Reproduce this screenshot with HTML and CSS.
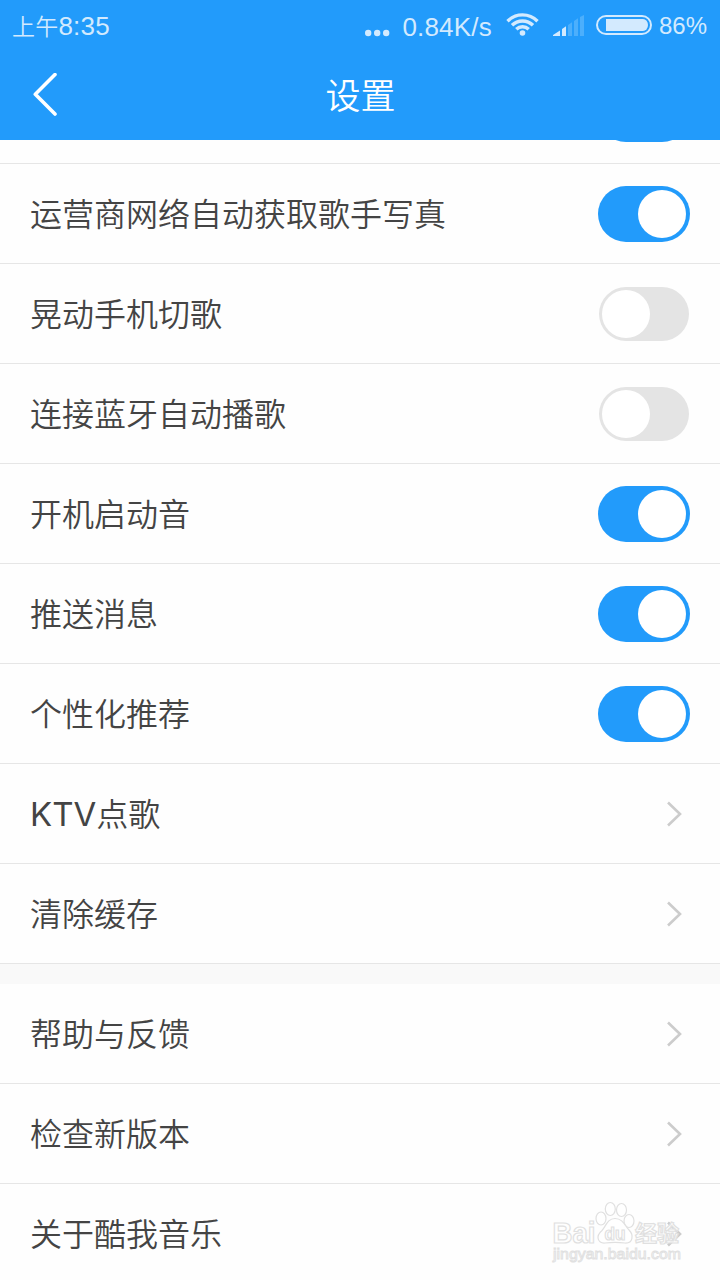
FILE: index.html
```html
<!DOCTYPE html>
<html lang="zh-CN">
<head>
  <meta charset="UTF-8">
  <title>设置</title>
  <link rel="stylesheet" href="styles.css">
</head>
<body>
  <div class="status-bar">
    <div class="time"><span>上午</span>8:35</div>
    <svg class="dots" width="25" height="8" viewBox="0 0 25 8"><circle cx="3.2" cy="4" r="3.2"/><circle cx="12.2" cy="4" r="3.2"/><circle cx="21.2" cy="4" r="3.2"/></svg>
    <div class="speed">0.84K/s</div>
    <svg class="wifi" width="34" height="26" viewBox="0 0 34 26">
      <circle cx="16.5" cy="21" r="2.8"/>
      <path d="M1.5 9.200a21 21 0 0 1 30 0M6 13.300a14.800 14.800 0 0 1 21 0M10.300 17.300a8.800 8.800 0 0 1 12.400 0"/>
    </svg>
    <svg class="signal" width="32" height="22" viewBox="0 0 32 22">
      <path d="M0 21V20L7 15.5V21zM9 14l4-2.700V21H9z"/>
      <path class="weak" d="M15 10l4-2.700V21h-4zM21 6l4-2.700V21h-4zM27 2l4-2v21h-4z"/>
    </svg>
    <svg class="battery" width="56" height="20" viewBox="0 0 56 20">
      <rect class="shell" x="1" y="1" width="54" height="18" rx="9"/>
      <path d="M10 4h37a5 6 0 0 1 0 12H10z"/>
    </svg>
    <div class="percent">86%</div>
  </div>

  <div class="header">
    <svg class="back" width="26" height="44" viewBox="0 0 26 44"><path d="M22 1.500L2.300 21.300 22 41"/></svg>
    <h1>设置</h1>
  </div>

  <div class="list">
    <div class="row first"><span></span><span class="switch on"></span></div>
    <div class="row"><span>运营商网络自动获取歌手写真</span><span class="switch on"></span></div>
    <div class="row"><span>晃动手机切歌</span><span class="switch"></span></div>
    <div class="row"><span>连接蓝牙自动播歌</span><span class="switch"></span></div>
    <div class="row"><span>开机启动音</span><span class="switch on"></span></div>
    <div class="row"><span>推送消息</span><span class="switch on"></span></div>
    <div class="row"><span>个性化推荐</span><span class="switch on"></span></div>
    <div class="row"><span><b>KTV</b>点歌</span><svg class="arrow" viewBox="0 0 16 26"><path d="M2 1.5L14 13 2 24.5"/></svg></div>
    <div class="row"><span>清除缓存</span><svg class="arrow" viewBox="0 0 16 26"><path d="M2 1.5L14 13 2 24.5"/></svg></div>
    <div class="gap"></div>
    <div class="row"><span>帮助与反馈</span><svg class="arrow" viewBox="0 0 16 26"><path d="M2 1.5L14 13 2 24.5"/></svg></div>
    <div class="row"><span>检查新版本</span><svg class="arrow" viewBox="0 0 16 26"><path d="M2 1.5L14 13 2 24.5"/></svg></div>
    <div class="row"><span>关于酷我音乐</span><svg class="arrow" viewBox="0 0 16 26"><path d="M2 1.5L14 13 2 24.5"/></svg></div>
  </div>

  <svg class="watermark" width="140" height="70" viewBox="0 0 140 70">
    <ellipse cx="51" cy="17.500" rx="5" ry="6.5"/>
    <ellipse cx="60.300" cy="8" rx="5" ry="6.500"/>
    <ellipse cx="71.500" cy="9" rx="5" ry="6.500"/>
    <ellipse cx="79" cy="20" rx="5" ry="6.500"/>
    <path d="M65 17.500c-8 0-9 8-13 12-7 6-4 13 3 12.500 7-1 13-1 20 0 8 .5 9-8 4-13-4-4-6-11.500-14-11.500z"/>
    <text class="brand" x="2.500" y="41.500" textLength="43" lengthAdjust="spacingAndGlyphs">Bai</text>
    <text class="du" x="54.500" y="38.500" textLength="21" lengthAdjust="spacingAndGlyphs">du</text>
    <text class="cn" x="85" y="40" textLength="44">经验</text>
    <text class="site" x="3" y="58" textLength="128" lengthAdjust="spacingAndGlyphs">jingyan.baidu.com</text>
  </svg>
</body>
</html>
```
FILE: styles.css
```css
* { box-sizing: border-box; }
body { margin: 0; width: 720px; height: 1280px; overflow: hidden; position: relative; background: #fefefe; color: #444; font-family: "Noto Sans CJK SC", sans-serif; }

.status-bar { height: 50px; padding: 2px 13px 0 12px; display: flex; align-items: center; background: #229bfb; color: #d3eafe; font-family: "Liberation Sans", "Noto Sans CJK SC", sans-serif; font-size: 26px; line-height: 48px; }
.status-bar svg { fill: #d3eafe; flex: none; }
.time { margin-right: auto; letter-spacing: .2px; }
.time span { font-size: 23px; font-weight: 350; }
.dots { margin: 13px 12px 0 0; }
.speed { margin-right: 14px; padding-top: 1px; letter-spacing: .2px; }
.wifi path { fill: none; stroke: #d3eafe; stroke-width: 3.4; }
.wifi { margin-right: 13px; margin-bottom: 3px; }
.signal { margin-right: 11px; margin-bottom: 1px; }
.signal .weak { fill: #4caffc; }
.battery { margin-right: 7px; margin-bottom: 3px; }
.battery .shell { fill: none; stroke: #d3eafe; stroke-width: 2; }
.percent { font-size: 24px; }

.header { height: 90px; padding: 0 33px; display: flex; align-items: center; background: #229bfb; color: #fff; }
.header h1 { margin: 0; padding: 0 25px 3px 0; flex: 1; text-align: center; font-size: 35px; font-weight: 350; }
.back path { fill: none; stroke: #fff; stroke-width: 3.6; stroke-linecap: round; stroke-linejoin: round; }

.list { height: 1140px; overflow: hidden; }
.row { height: 100px; padding: 0 30px; display: flex; align-items: center; justify-content: space-between; border-bottom: 1px solid #e6e6e6; font-size: 32px; font-weight: 350; }
.row span:first-child { padding-bottom: 4px; }
.row.first { margin-top: -76px; }
.row b { font-family: Inter, sans-serif; font-size: 33px; font-weight: 400; line-height: 1; }
.gap { height: 20px; background: #f9f9f9; }

.switch { width: 90px; height: 54px; margin-right: 1px; padding: 3px; border-radius: 27px; background: #e4e4e4; }
.switch::before { content: ""; display: block; width: 48px; height: 48px; border-radius: 50%; background: #fff; }
.switch.on { width: 92px; height: 56px; margin-right: 0; padding: 4px; border-radius: 28px; background: #229bfb; }
.switch.on::before { margin-left: auto; }
.arrow { width: 16px; height: 26px; margin-right: 8px; fill: none; stroke: #ccc; stroke-width: 2.6; }

/* logo floats over the last row */
.watermark { position: absolute; left: 550px; top: 1201px; fill: #fff; fill-opacity: .8; stroke: #e0e0e0; stroke-width: 1.2; font-family: "Liberation Sans", sans-serif; font-weight: bold; }
.brand { font-size: 30px; }
.du { font-size: 19px; }
.cn { font-family: "Noto Sans CJK SC", sans-serif; font-size: 22px; font-weight: 700; }
.site { font-size: 15px; font-weight: normal; stroke-width: .9; }
```
